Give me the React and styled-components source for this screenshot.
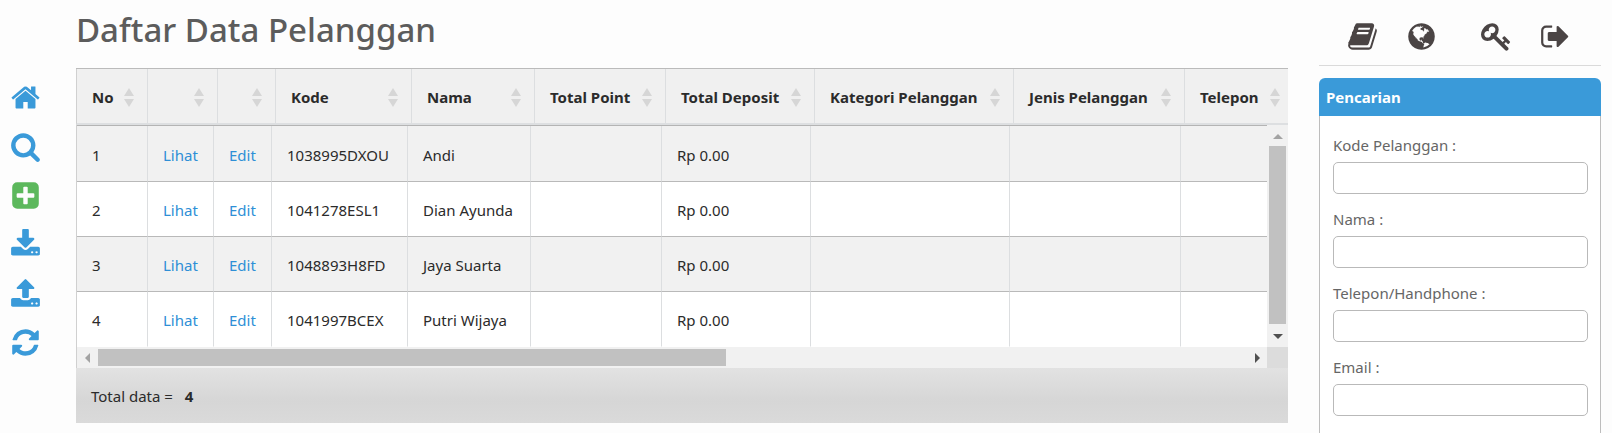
import styled, { createGlobalStyle } from 'styled-components';
import { useState } from 'react';

const icons = {
  home: 'M1472 992v480q0 26-19 45t-45 19h-384v-384h-256v384h-384q-26 0-45-19t-19-45v-480q0-1 .5-3t.5-3l575-474 575 474q1 2 1 6zm223-69l-62 74q-8 9-21 11h-3q-13 0-21-7l-692-577-692 577q-12 8-24 7-13-2-21-11l-62-74q-8-10-7-23.5t11-21.5l719-599q32-26 76-26t76 26l244 204v-195q0-14 9-23t23-9h192q14 0 23 9t9 23v408l219 182q10 8 11 21.5t-7 23.5z',
  search:
    'M1216 832q0-185-131.5-316.5t-316.5-131.5-316.5 131.5-131.5 316.5 131.5 316.5 316.5 131.5 316.5-131.5 131.5-316.5zm512 832q0 52-38 90t-90 38q-54 0-90-38l-343-342q-179 124-399 124-143 0-273.5-55.5t-225-150-150-225-55.5-273.5 55.5-273.5 150-225 225-150 273.5-55.5 273.5 55.5 225 150 150 225 55.5 273.5q0 220-124 399l343 343q37 37 37 90z',
  plus: 'M1408 960v-128q0-26-19-45t-45-19h-320v-320q0-26-19-45t-45-19h-128q-26 0-45 19t-19 45v320h-320q-26 0-45 19t-19 45v128q0 26 19 45t45 19h320v320q0 26 19 45t45 19h128q26 0 45-19t19-45v-320h320q26 0 45-19t19-45zm256-544v960q0 119-84.5 203.5t-203.5 84.5h-960q-119 0-203.5-84.5t-84.5-203.5v-960q0-119 84.5-203.5t203.5-84.5h960q119 0 203.5 84.5t84.5 203.5z',
  download:
    'M1344 1344q0-26-19-45t-45-19-45 19-19 45 19 45 45 19 45-19 19-45zm256 0q0-26-19-45t-45-19-45 19-19 45 19 45 45 19 45-19 19-45zm128-224v320q0 40-28 68t-68 28h-1472q-40 0-68-28t-28-68v-320q0-40 28-68t68-28h465l135 136q58 56 136 56t136-56l136-136h464q40 0 68 28t28 68zm-325-569q17 41-14 70l-448 448q-18 19-45 19t-45-19l-448-448q-31-29-14-70 17-39 59-39h256v-448q0-26 19-45t45-19h256q26 0 45 19t19 45v448h256q42 0 59 39z',
  upload:
    'M1344 1472q0-26-19-45t-45-19-45 19-19 45 19 45 45 19 45-19 19-45zm256 0q0-26-19-45t-45-19-45 19-19 45 19 45 45 19 45-19 19-45zm128-224v320q0 40-28 68t-68 28h-1472q-40 0-68-28t-28-68v-320q0-40 28-68t68-28h427q21 56 70.5 92t110.5 36h256q61 0 110.5-36t70.5-92h427q40 0 68 28t28 68zm-325-648q-17 40-59 40h-256v448q0 26-19 45t-45 19h-256q-26 0-45-19t-19-45v-448h-256q-42 0-59-40-17-39 14-69l448-448q18-19 45-19t45 19l448 448q31 30 14 69z',
  refresh:
    'M1639 1056q0 5-1 7-64 268-268 434.5t-478 166.5q-146 0-282.5-55t-243.5-157l-129 129q-19 19-45 19t-45-19-19-45v-448q0-26 19-45t45-19h448q26 0 45 19t19 45-19 45l-137 137q71 66 161 102t187 36q134 0 250-65t186-179q11-17 53-117 8-23 30-23h192q13 0 22.5 9.5t9.5 22.5zm25-800v448q0 26-19 45t-45 19h-448q-26 0-45-19t-19-45 19-45l138-138q-148-137-349-137-134 0-250 65t-186 179q-11 17-53 117-8 23-30 23h-199q-13 0-22.5-9.5t-9.5-22.5v-7q65-268 270-434.5t480-166.5q146 0 284 55.5t245 156.5l130-129q19-19 45-19t45 19 19 45z',
  book: 'M1703 478q40 57 18 129l-275 906q-19 64-76.5 107.5t-122.5 43.5h-923q-77 0-148.5-53.5t-99.5-131.5q-24-67-2-127 0-4 3-27t4-37q1-8-3-21.5t-3-19.5q2-11 8-21t16.5-23.5 16.5-23.5q23-38 45-91.5t30-91.5q3-10 .5-30t-.5-28q3-11 17-28t17-23q21-36 42-92t25-90q1-9-2.5-32t.5-28q4-13 22-30.5t22-22.5q19-26 42.5-84.5t27.5-96.5q1-8-3-25.5t-2-26.5q2-8 9-18t18-23 17-21q8-12 16.5-30.5t15-35 16-36 19.5-32 26.5-23.5 36-11.5 47.5 5.5l-1 3q38-9 51-9h761q74 0 114 56t18 130l-274 906q-36 119-71.5 153.5t-128.5 34.5h-869q-27 0-38 15-11 16-1 43 24 70 144 70h923q29 0 56-15.5t35-41.5l300-987q7-22 5-57 38 15 59 43zm-1064 2q-4 13 2 22.5t20 9.5h608q13 0 25.5-9.5t16.5-22.5l21-64q4-13-2-22.5t-20-9.5h-608q-13 0-25.5 9.5t-16.5 22.5zm-83 256q-4 13 2 22.5t20 9.5h608q13 0 25.5-9.5t16.5-22.5l21-64q4-13-2-22.5t-20-9.5h-608q-13 0-25.5 9.5t-16.5 22.5z',
  globe:
    'M896 128q209 0 385.5 103t279.5 279.5 103 385.5-103 385.5-279.5 279.5-385.5 103-385.5-103-279.5-279.5-103-385.5 103-385.5 279.5-279.5 385.5-103zm274 521q-2 1-9.5 9.5t-13.5 9.5q2 0 4.5-5t5-11 3.5-7q6-7 22-15 14-6 52-12 34-8 51 11-2-2 9.5-13t14.5-12q3-2 15-4.5t15-7.5l2-22q-12 1-17.5-7t-6.5-21q0 2-6 8 0-7-4.5-8t-11.5 1-9 1q-10-3-15-7.5t-8-16.5-4-15q-2-5-9.5-11t-9.5-10q-1-2-2.5-5.5t-3-6.5-4-5.5-5.5-2.5-7 5-7.5 10-4.5 5q-3-2-6-1.5t-4.5 1-4.5 3-5 3.5q-3 2-8.5 3t-8.5 2q15-5-1-11-10-4-16-3 9-4 7.5-12t-8.5-14h5q-1-4-8.5-8.5t-17.5-8.5-13-6q-8-5-34-9.5t-33-.5q-5 6-4.5 10.5t4 14 3.5 12.5q1 6-5.5 13t-6.5 12q0 7 14 15.5t10 21.5q-3 8-16 16t-16 12q-5 8-1.5 18.5t10.5 16.5q2 2 1.5 4t-3.5 4.5-5.5 4-6.5 3.5l-3 2q-11 5-20.5-6t-13.5-26q-7-25-16-30-23-8-29 1-5-13-41-26-25-9-58-4 6-1 0-15-7-15-19-12 3-6 4-17.5t1-13.5q3-13 12-23 1-1 7-8.5t9.5-13.5.5-6q35 4 50-11 5-5 11.5-17t10.5-17q9-6 14-5.5t14.5 5.5 14.5 5q14 1 15.5-11t-7.5-20q12 1 3-17-4-7-8-9-12-4-27 5-8 4 2 8-1-1-9.5 10.5t-16.5 17.5-16-5q-1-1-5.5-13.5t-9.5-13.5q-8 0-16 15 3-8-11-15t-24-8q19-12-8-27-7-4-20.5-5t-19.5 4q-5 7-5.5 11.5t5 8 10.5 5.5 11.5 4 8.5 3q14 10 8 14-2 1-8.5 3.5t-11.5 4.5-6 4q-3 4 0 14t-2 14q-5-5-9-17.5t-7-16.5q7 9-25 6l-10-1q-4 0-16 2t-20.5 1-13.5-8q-4-8 0-20 1-4 4-2-4-3-11-9.5t-10-8.5q-46 15-94 41 6 1 12-1 5-2 13-6.5t10-5.5q34-14 42-7l5-5q14 16 20 25-7-4-30-1-20 6-22 12 7 12 5 18-4-3-11.5-10t-14.5-11-15-5q-16 0-22 1-146 80-235 222 7 7 12 8 4 1 5 9t2.5 11 11.5-3q9 8 3 19 1-1 44 27 19 17 21 21 3 11-10 18-1-2-9-9t-9-4q-3 5 .5 18.5t10.5 12.5q-7 0-9.5 16t-2.5 35.5-1 23.5l2 1q-3 12 5.5 34.5t21.5 19.5q-13 3 20 43 6 8 8 9 3 2 12 7.5t15 10 10 10.5q4 5 10 22.5t14 23.5q-2 6 9.5 20t10.5 23q-1 0-2.5 1t-2.5 1q3 7 15.5 14t15.5 13q1 3 2 10t3 11 8 2q2-20-24-62-15-25-17-29-3-5-5.5-15.5t-4.5-14.5q2 0 6 1.5t8.5 3.5 7.5 4 2 3q-3 7 2 17.5t12 18.5 17 19 12 13q6 6 14 19.5t0 13.5q9 0 20 10.5t17 19.5q5 8 8 26t5 24q2 7 8.5 13.5t12.5 9.5l16 8 13 7q5 2 18.5 10.5t21.5 11.5q10 4 16 4t14.5-2.5 13.5-3.5q15-2 29 15t21 21q36 19 55 11-2 1 .5 7.5t8 15.5 9 14.5 5.5 8.5q5 6 18 15t18 15q6-4 7-9-3 8 7 20t18 10q14-3 14-32-31 15-49-18 0-1-2.5-5.5t-4-8.5-2.5-8.5 0-7.5 5-3q9 0 10-3.5t-2-12.5-4-13q-1-8-11-20t-12-15q-5 9-16 8t-16-9q0 1-1.5 5.5t-1.5 6.5q-13 0-15-1 1-3 2.5-17.5t3.5-22.5q1-4 5.5-12t7.5-14.5 4-12.5-4.5-9.5-17.5-2.5q-19 1-26 20-1 3-3 10.5t-5 11.5-9 7q-7 3-24 2t-24-5q-13-8-22.5-29t-9.5-37q0-10 2.5-26.5t3-25-5.5-24.5q3-2 9-9.5t10-10.5q2-1 4.5-1.5t4.5 0 4-1.5 3-6q-1-1-4-3-3-3-4-3 7 3 28.5-1.5t27.5 1.5q15 11 22-2 0-1-2.5-9.5t-.5-13.5q5 27 29 9 3 3 15.5 5t17.5 5q3 2 7 5.5t5.5 4.5 5-.5 8.5-6.5q10 14 12 24 11 40 19 44 7 3 11 2t4.5-9.5 0-14-1.5-12.5l-1-8v-18l-1-8q-15-3-18.5-12t1.5-18.5 15-18.5q1-1 8-3.5t15.5-6.5 12.5-8q21-19 15-35 7 0 11-9-1 0-5-3t-7.5-5-4.5-2q9-5 2-16 5-3 7.5-11t7.5-10q9 12 21 2 8-8 1-16 5-7 20.5-10.5t18.5-9.5q7 2 8-2t1-12 3-12q4-5 15-9t13-5l17-11q3-4 0-4 18 2 31-11 10-11-6-20 3-6-3-9.5t-15-5.5q3-1 11.5-.5t10.5-1.5q15-10-7-16-17-5-43 12zm-163 877q206-36 351-189-3-3-12.5-4.5t-12.5-3.5q-18-7-24-8 1-7-2.5-13t-8-9-12.5-8-11-7q-2-2-7-6t-7-5.5-7.5-4.5-8.5-2-10 1l-3 1q-3 1-5.5 2.5t-5.5 3-4 3 0 2.5q-21-17-36-22-5-1-11-5.5t-10.5-7-10-1.5-11.5 7q-5 5-6 15t-2 13q-7-5 0-17.5t2-18.5q-3-6-10.5-4.5t-12 4.5-11.5 8.5-9 6.5-8.5 5.5-8.5 7.5q-3 4-6 12t-5 11q-2-4-11.5-6.5t-9.5-5.5q2 10 4 35t5 38q7 31-12 48-27 25-29 40-4 22 12 26 0 7-8 20.5t-7 21.5q0 6 2 16z',
  key: 'M832 512q0-80-56-136t-136-56-136 56-56 136q0 42 19 83-41-19-83-19-80 0-136 56t-56 136 56 136 136 56 136-56 56-136q0-42-19-83 41 19 83 19 80 0 136-56t56-136zm851 704q0 17-49 66t-66 49q-9 0-28.5-16t-36.5-33-38.5-40-24.5-26l-96 96 220 220q28 28 28 68 0 42-39 81t-81 39q-40 0-68-28l-671-671q-176 131-365 131-163 0-265.5-102.5t-102.5-265.5q0-160 95-313t248-248 313-95q163 0 265.5 102.5t102.5 265.5q0 189-131 365l355 355 96-96q-3-3-26-24.5t-40-38.5-33-36.5-16-28.5q0-17 49-66t66-49q13 0 23 10 6 6 46 44.5t82 79.5 86.5 86 73 78 28.5 41z',
  signOut:
    'M704 1440q0 4 1 20t.5 26.5-3 23.5-10 19.5-20.5 6.5h-320q-119 0-203.5-84.5t-84.5-203.5v-704q0-119 84.5-203.5t203.5-84.5h320q13 0 22.5 9.5t9.5 22.5q0 4 1 20t.5 26.5-3 23.5-10 19.5-20.5 6.5h-320q-66 0-113 47t-47 113v704q0 66 47 113t113 47h312l11.5 1 11.5 3 8 5.5 7 9 2 13.5zm928-544q0 26-19 45l-544 544q-19 19-45 19t-45-19-19-45v-288h-448q-26 0-45-19t-19-45v-384q0-26 19-45t45-19h448v-288q0-26 19-45t45-19 45 19l544 544q19 19 19 45z',
};

const menus = [
  { icon: 'home', label: 'Beranda' },
  { icon: 'search', label: 'Cari' },
  { icon: 'plus', label: 'Tambah', color: '#5cb85c' },
  { icon: 'download', label: 'Unduh' },
  { icon: 'upload', label: 'Unggah' },
  { icon: 'refresh', label: 'Muat ulang' },
];

const columns = [
  { name: 'No', head: 71, body: 71 },
  { name: '', head: 70, body: 66 },
  { name: '', head: 58, body: 58 },
  { name: 'Kode', head: 136, body: 136 },
  { name: 'Nama', head: 123, body: 123 },
  { name: 'Total Point', head: 131, body: 131 },
  { name: 'Total Deposit', head: 149, body: 149 },
  { name: 'Kategori Pelanggan', head: 199, body: 199 },
  { name: 'Jenis Pelanggan', head: 171, body: 171 },
  { name: 'Telepon', head: 109, body: 113 },
];

const customers = [
  { kode: '1038995DXOU', nama: 'Andi', deposit: 'Rp 0.00' },
  { kode: '1041278ESL1', nama: 'Dian Ayunda', deposit: 'Rp 0.00' },
  { kode: '1048893H8FD', nama: 'Jaya Suarta', deposit: 'Rp 0.00' },
  { kode: '1041997BCEX', nama: 'Putri Wijaya', deposit: 'Rp 0.00' },
];

const fields = [
  { name: 'kode', label: 'Kode Pelanggan :' },
  { name: 'nama', label: 'Nama :' },
  { name: 'telepon', label: 'Telepon/Handphone :' },
  { name: 'email', label: 'Email :' },
];

const Icon = ({ name }) => (
  <IconSvg viewBox="0 0 1792 1792" aria-hidden="true">
    <path d={icons[name]} />
  </IconSvg>
);

const CustomerTable = () => (
  <TableBox>
    <HeadView>
      <Table>
        <colgroup>
          {columns.map((column, i) => (
            <Col key={i} $width={column.head} />
          ))}
        </colgroup>
        <thead>
          <tr>
            {columns.map((column, i) => (
              <Th key={i} scope="col">
                <SortButton type="button" aria-label={column.name || 'Aksi'}>
                  {column.name}
                  <SortSvg viewBox="0 0 10 19" aria-hidden="true">
                    <path d="M5 0l5 8H0zM0 11h10l-5 8z" />
                  </SortSvg>
                </SortButton>
              </Th>
            ))}
          </tr>
        </thead>
      </Table>
    </HeadView>
    <ScrollGrid>
      <BodyView>
        <Table>
          <colgroup>
            {columns.map((column, i) => (
              <Col key={i} $width={column.body} />
            ))}
          </colgroup>
          <tbody>
            {customers.map((customer, i) => (
              <Row key={customer.kode}>
                <Td>{i + 1}</Td>
                <Td>
                  <Link href="#lihat">Lihat</Link>
                </Td>
                <Td>
                  <Link href="#edit">Edit</Link>
                </Td>
                <Td>{customer.kode}</Td>
                <Td>{customer.nama}</Td>
                <Td />
                <Td>{customer.deposit}</Td>
                <Td />
                <Td />
                <Td />
              </Row>
            ))}
          </tbody>
        </Table>
      </BodyView>
      <VerticalBar>
        <ArrowButton type="button" aria-label="Gulir ke atas" $color="#a3a3a3">
          <ArrowSvg viewBox="0 0 10 10">
            <path d="M0 8l5-5 5 5z" />
          </ArrowSvg>
        </ArrowButton>
        <VerticalThumb />
        <ArrowButton type="button" aria-label="Gulir ke bawah" $color="#505050">
          <ArrowSvg viewBox="0 0 10 10">
            <path d="M0 2l5 5 5-5z" />
          </ArrowSvg>
        </ArrowButton>
      </VerticalBar>
      <HorizontalBar>
        <ArrowButton type="button" aria-label="Gulir ke kiri" $color="#a3a3a3">
          <ArrowSvg viewBox="0 0 10 10">
            <path d="M7 0v10L2 5z" />
          </ArrowSvg>
        </ArrowButton>
        <Track>
          <HorizontalThumb />
        </Track>
        <ArrowButton type="button" aria-label="Gulir ke kanan" $color="#505050">
          <ArrowSvg viewBox="0 0 10 10">
            <path d="M3 0v10l5-5z" />
          </ArrowSvg>
        </ArrowButton>
      </HorizontalBar>
      <Corner />
    </ScrollGrid>
    <TableFooter>
      Total data = <Total>{customers.length}</Total>
    </TableFooter>
  </TableBox>
);

const SearchPanel = () => {
  const [filter, setFilter] = useState({ kode: '', nama: '', telepon: '', email: '' });

  const handleFilter = (e) => {
    const { name, value } = e.target;
    setFilter({ ...filter, [name]: value });
  };

  return (
    <Panel>
      <PanelTitle>Pencarian</PanelTitle>
      <Form>
        {fields.map((field) => (
          <Field key={field.name}>
            <Label htmlFor={field.name}>{field.label}</Label>
            <Input id={field.name} name={field.name} value={filter[field.name]} onChange={handleFilter} />
          </Field>
        ))}
      </Form>
    </Panel>
  );
};

const App = () => {
  return (
    <>
      <GlobalStyle />
      <Page>
        <SideMenu>
          {menus.map((menu) => (
            <IconButton key={menu.icon} type="button" aria-label={menu.label} $color={menu.color || '#3a9ad9'}>
              <Icon name={menu.icon} />
            </IconButton>
          ))}
        </SideMenu>
        <Main>
          <Title>Daftar Data Pelanggan</Title>
          <CustomerTable />
        </Main>
        <Aside>
          <TopMenu>
            <TopGroup>
              <IconButton type="button" aria-label="Panduan" $color="#4a4444">
                <Icon name="book" />
              </IconButton>
              <IconButton type="button" aria-label="Bahasa" $color="#4a4444">
                <Icon name="globe" />
              </IconButton>
            </TopGroup>
            <TopGroup>
              <IconButton type="button" aria-label="Kata sandi" $color="#4a4444">
                <Icon name="key" />
              </IconButton>
              <IconButton type="button" aria-label="Keluar" $color="#4a4444">
                <Icon name="signOut" />
              </IconButton>
            </TopGroup>
          </TopMenu>
          <SearchPanel />
        </Aside>
      </Page>
    </>
  );
};

export default App;

const GlobalStyle = createGlobalStyle`
  * {
    box-sizing: border-box;
  }
  body {
    margin: 0;
    background-color: #fdfdfd;
    color: #2b2b2b;
    font-family: 'Segoe UI', 'Noto Sans', 'Open Sans', sans-serif;
    font-size: 15px;
    line-height: 22px;
  }
`;

const Page = styled.div`
  display: flex;
  min-height: 100vh;
`;
const SideMenu = styled.nav`
  display: flex;
  flex-direction: column;
  gap: 18px;
  flex: none;
  width: 76px;
  padding: 82px 10px 0;
`;
const IconButton = styled.button`
  display: flex;
  width: 31px;
  height: 31px;
  padding: 0;
  border: none;
  background: none;
  color: ${({ $color }) => $color};
  cursor: pointer;
`;
const IconSvg = styled.svg`
  width: 31px;
  height: 31px;
  fill: currentColor;
`;
const Main = styled.main`
  flex: 1;
  min-width: 0;
`;
const Title = styled.h1`
  margin: 0;
  padding: 6px 0 14px;
  color: #5c5c5c;
  font-size: 33px;
  font-weight: 500;
  line-height: 48px;
`;
const TableBox = styled.section`
  border-top: 1px solid #bbbbbb;
`;
const HeadView = styled.div`
  overflow: hidden;
  border-left: 1px solid #d0d0d0;
  border-bottom: 2px solid #dddfe1;
  background-color: #f0f0f0;
`;
const ScrollGrid = styled.div`
  display: grid;
  grid-template-columns: minmax(0, 1fr) 21px;
  border-left: 1px solid #d0d0d0;
`;
const BodyView = styled.div`
  overflow: hidden;
  border-top: 1px solid #b4b4b4;
`;
const Table = styled.table`
  width: 1217px;
  border-collapse: separate;
  border-spacing: 0;
  table-layout: fixed;
`;
const Col = styled.col`
  width: ${({ $width }) => $width}px;
`;
const Th = styled.th`
  height: 54px;
  padding: 2px 13px 0 15px;
  border-right: 1px solid #dcdee0;
  font-weight: 700;
  text-align: left;
  white-space: nowrap;
`;
const SortButton = styled.button`
  display: flex;
  align-items: center;
  justify-content: space-between;
  width: 100%;
  padding: 0;
  border: none;
  background: none;
  color: inherit;
  font: inherit;
  cursor: pointer;
`;
const SortSvg = styled.svg`
  flex: none;
  width: 10px;
  height: 19px;
  margin-left: auto;
  fill: #d6d6d6;
`;
const Row = styled.tr`
  background-color: #ffffff;

  &:nth-child(odd) {
    background-color: #f1f1f1;
  }
`;
const Td = styled.td`
  height: 55px;
  padding: 2px 15px 0;
  border-right: 1px solid #dcdee0;
  border-bottom: 1px solid #b9b9b9;
  white-space: nowrap;

  ${Row}:first-child & {
    height: 56px;
  }
  ${Row}:last-child & {
    border-bottom-color: #ffffff;
  }
`;
const Link = styled.a`
  color: #2e8fd6;
  text-decoration: none;
`;
const VerticalBar = styled.div`
  display: flex;
  flex-direction: column;
  background-color: #f1f1f1;
`;
const HorizontalBar = styled.div`
  display: flex;
  background-color: #f1f1f1;
`;
const ArrowButton = styled.button`
  display: flex;
  align-items: center;
  justify-content: center;
  flex: none;
  width: 21px;
  height: 21px;
  padding: 0;
  border: none;
  background: none;
  color: ${({ $color }) => $color};
`;
const ArrowSvg = styled.svg`
  width: 10px;
  height: 10px;
  fill: currentColor;
`;
const VerticalThumb = styled.div`
  flex: 1;
  margin: 0 2px 2px;
  background-color: #c1c1c1;
`;
const Track = styled.div`
  flex: 1;
  padding: 2px 0;
`;
const HorizontalThumb = styled.div`
  width: 628px;
  max-width: 100%;
  height: 17px;
  background-color: #c1c1c1;
`;
const Corner = styled.div`
  background-color: #dcdcdc;
`;
const TableFooter = styled.footer`
  padding: 17px 15px 16px;
  background-image: linear-gradient(#e2e2e2, #d6d6d6 60%, #dadada);
`;
const Total = styled.strong`
  margin-left: 8px;
`;
const Aside = styled.aside`
  display: flex;
  flex-direction: column;
  flex: none;
  width: 324px;
  padding: 0 11px 0 31px;
`;
const TopMenu = styled.nav`
  display: flex;
  justify-content: center;
  gap: 44px;
  margin-bottom: 12px;
  padding: 21px 2px 13px 0;
  border-bottom: 1px solid #dadada;
`;
const TopGroup = styled.div`
  display: flex;
  gap: 28px;
`;
const Panel = styled.section`
  flex: 1;
`;
const PanelTitle = styled.h2`
  margin: 0;
  padding: 8px 7px;
  border-radius: 6px 6px 0 0;
  background-color: #3a9ad9;
  color: #ffffff;
  font-size: 15px;
  font-weight: 700;
  line-height: 22px;
`;
const Form = styled.form`
  display: flex;
  flex-direction: column;
  gap: 14px;
  padding: 18px 12px 17px 13px;
  border: solid #bdbdbd;
  border-width: 0 1px;
  background-color: #ffffff;
`;
const Field = styled.div`
  display: flex;
  flex-direction: column;
  gap: 6px;
`;
const Label = styled.label`
  color: #666666;
`;
const Input = styled.input`
  width: 100%;
  height: 32px;
  padding: 4px 8px;
  border: 1px solid #b9b9b9;
  border-radius: 5px;
  background-color: #ffffff;
  font: inherit;
`;
